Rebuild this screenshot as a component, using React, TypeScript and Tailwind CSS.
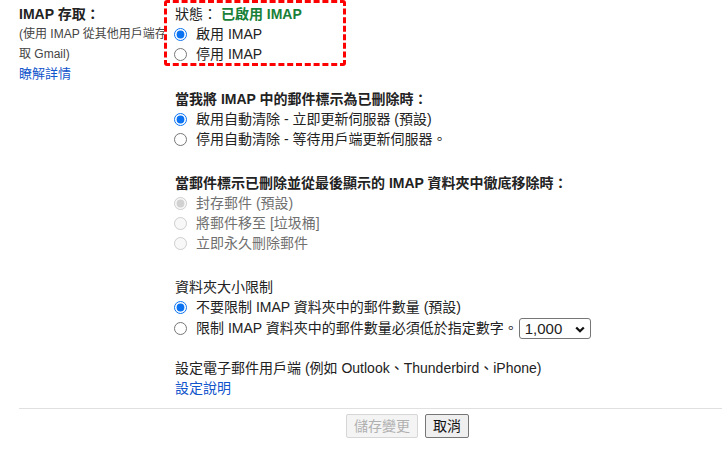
import { useState } from 'react';

const font = "font-['Liberation_Sans','Noto_Sans_CJK_TC',sans-serif]";

type Opt = { label: string; checked?: boolean };

const RadioRow = ({ name, label, checked, disabled }: { name: string; label: string; checked?: boolean; disabled?: boolean }) => (
  <label className="flex items-center gap-[9px] h-5 -ml-px">
    <input
      type="radio"
      name={name}
      defaultChecked={checked}
      disabled={disabled}
      className="m-0 w-[13px] h-[13px] shrink-0 accent-[#0b73f2]"
    />
    <span className={disabled ? 'text-[#707070]' : 'text-[#222]'}>{label}</span>
  </label>
);

const RadioGroup = ({ name, options, disabled }: { name: string; options: Opt[]; disabled?: boolean }) => (
  <div>
    {options.map((o) => (
      <RadioRow key={o.label} name={name} label={o.label} checked={o.checked} disabled={disabled} />
    ))}
  </div>
);

const App = () => {
  const [limit, setLimit] = useState('1000');

  return (
    <div className={`${font} w-[722px] h-[449px] overflow-hidden bg-white text-[14px] leading-5 text-[#222] pt-[4px] pl-[19px]`}>
      <div className="flex">
        {/* 左欄 */}
        <div className="w-[156px] shrink-0 whitespace-nowrap">
          <div className="font-bold">IMAP 存取：</div>
          <div className="text-[12px] text-[#444]">
            (使用 IMAP 從其他用戶端存
            <br />
            取 Gmail)
          </div>
          <div className="text-[13px] text-[#1155cc]">瞭解詳情</div>
        </div>

        {/* 右欄 */}
        <div className="flex-1">
          {/* 狀態 */}
          <div className="relative">
            <div className="absolute -left-[11px] -top-[4px] w-[182px] h-[66px] bg-white border-[3px] border-dashed border-[#ff0000] rounded-[3px]" />
            <div className="relative">
              <div>
                狀態： <span className="font-bold text-[#188038]">已啟用 IMAP</span>
              </div>
              <RadioGroup
                name="imap"
                options={[{ label: '啟用 IMAP', checked: true }, { label: '停用 IMAP' }]}
              />
            </div>
          </div>

          {/* 自動清除 */}
          <div className="mt-[25px]">
            <div className="font-bold">當我將 IMAP 中的郵件標示為已刪除時：</div>
            <RadioGroup
              name="expunge"
              options={[
                { label: '啟用自動清除 - 立即更新伺服器 (預設)', checked: true },
                { label: '停用自動清除 - 等待用戶端更新伺服器。' },
              ]}
            />
          </div>

          {/* 徹底移除 */}
          <div className="mt-6">
            <div className="font-bold">當郵件標示已刪除並從最後顯示的 IMAP 資料夾中徹底移除時：</div>
            <RadioGroup
              name="delete"
              disabled
              options={[
                { label: '封存郵件 (預設)', checked: true },
                { label: '將郵件移至 [垃圾桶]' },
                { label: '立即永久刪除郵件' },
              ]}
            />
          </div>

          {/* 資料夾大小 */}
          <div className="mt-6">
            <div>資料夾大小限制</div>
            <RadioRow name="size" label="不要限制 IMAP 資料夾中的郵件數量 (預設)" checked />
            <div className="flex items-center h-[22px]">
              <RadioRow name="size" label="限制 IMAP 資料夾中的郵件數量必須低於指定數字。" />
              <div className="relative ml-[1px]">
                <select
                  value={limit}
                  onChange={(e) => setLimit(e.target.value)}
                  className="appearance-none w-[72px] h-[21px] border border-[#767676] rounded-[3px] bg-white pl-[5px] text-[15px] leading-[19px] text-[#222]"
                >
                  <option value="1000">1,000</option>
                  <option value="2000">2,000</option>
                  <option value="5000">5,000</option>
                  <option value="10000">10,000</option>
                </select>
                <svg className="absolute right-[6px] top-[8px] pointer-events-none" width="10" height="7" viewBox="0 0 10 7">
                  <path d="M1.2 1.5 L5 5.2 L8.8 1.5" fill="none" stroke="#111" strokeWidth="2.3" />
                </svg>
              </div>
            </div>
          </div>

          {/* 用戶端 */}
          <div className="mt-[19px]">
            <div>設定電子郵件用戶端 (例如 Outlook、Thunderbird、iPhone)</div>
            <div className="text-[#1155cc]">設定說明</div>
          </div>
        </div>
      </div>

      <div className="mt-[10px] h-px bg-[#e0e0e0]" />

      <div className="flex gap-[7px] pl-[327px] mt-[5px]">
        <button disabled className="h-6 w-[72px] border border-[#d6d6d6] bg-[#f4f4f4] text-[#b0b0b0] rounded-[2px] leading-5">
          儲存變更
        </button>
        <button className="h-6 w-[44px] border border-[#767676] bg-[#efefef] text-[#111] rounded-[2px] leading-5">
          取消
        </button>
      </div>
    </div>
  );
};

export default App;
